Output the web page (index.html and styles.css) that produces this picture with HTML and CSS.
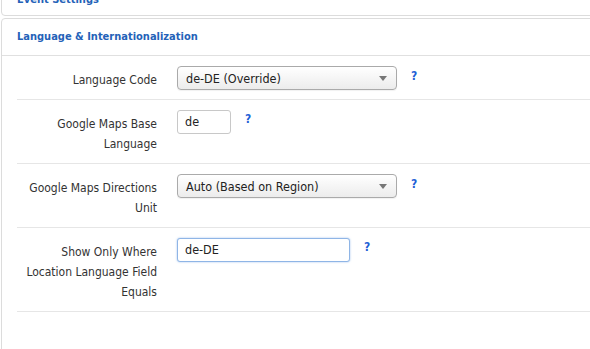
FILE: index.html
```html
<!DOCTYPE html>
<html>
<head>
<meta charset="utf-8">
<link rel="stylesheet" href="styles.css">
</head>
<body>
<div class="page">
  <div class="panel panel-collapsed">
    <div class="panel-head">Event Settings</div>
  </div>
  <div class="panel">
    <div class="panel-head">Language &amp; Internationalization</div>
    <div class="panel-body">
      <div class="row">
        <div class="label">Language Code</div>
        <div class="control">
          <div class="select"><span>de-DE (Override)</span><span class="caret"></span></div>
          <span class="help">?</span>
        </div>
      </div>
      <div class="row">
        <div class="label">Google Maps Base Language</div>
        <div class="control">
          <div class="input input-small">de</div>
          <span class="help">?</span>
        </div>
      </div>
      <div class="row">
        <div class="label">Google Maps Directions Unit</div>
        <div class="control">
          <div class="select"><span>Auto (Based on Region)</span><span class="caret"></span></div>
          <span class="help">?</span>
        </div>
      </div>
      <div class="row">
        <div class="label">Show Only Where Location Language Field Equals</div>
        <div class="control">
          <div class="input input-medium focus">de-DE</div>
          <span class="help">?</span>
        </div>
      </div>
    </div>
  </div>
</div>
</body>
</html>
```

FILE: styles.css
```css
html, body {
  margin: 0;
  padding: 0;
  background: #fff;
  overflow: hidden;
}
body {
  font-family: "DejaVu Sans Condensed", "DejaVu Sans", sans-serif;
  font-size: 12px;
  color: #333;
}
.page {
  width: 640px;
  padding-left: 1px;
}
.panel {
  border: 1px solid #dcdcdc;
  border-radius: 4px;
  background: #fff;
  margin-bottom: 2px;
  min-height: 400px;
}
.panel-collapsed {
  min-height: 0;
  margin-top: -22px;
}
.panel-head {
  height: 36px;
  line-height: 36px;
  padding-left: 15px;
  color: #2462b8;
  font-weight: bold;
  font-size: 11px;
}
.panel-collapsed .panel-head {
  line-height: 41px;
  overflow: hidden;
}
.panel-body {
  border-top: 1px solid #e0e0e0;
  padding-left: 15px;
}
.row {
  display: flex;
  gap: 20px;
  padding: 10px 0 9px;
  border-bottom: 1px solid #e6e6e6;
}
.label {
  width: 140px;
  text-align: right;
  line-height: 20px;
  padding-top: 4px;
}
.control {
  display: flex;
  align-items: flex-start;
  gap: 14px;
}
.select {
  box-sizing: border-box;
  width: 220px;
  height: 24px;
  border: 1px solid #aaa;
  border-radius: 4px;
  background: linear-gradient(#ffffff, #ececec);
  display: flex;
  align-items: center;
  justify-content: space-between;
  padding: 0 9px 0 8px;
  color: #222;
  font-size: 12.5px;
  box-shadow: 0 1px 1px rgba(0,0,0,0.06);
}
.caret {
  width: 0;
  height: 0;
  border-left: 4px solid transparent;
  border-right: 4px solid transparent;
  border-top: 5px solid #777;
}
.input {
  box-sizing: border-box;
  height: 24px;
  border: 1px solid #c8c8c8;
  border-radius: 3px;
  line-height: 22px;
  padding: 0 7px;
  color: #222;
  font-size: 12.5px;
  background: #fff;
}
.input-small { width: 54px; }
.input-medium { width: 173px; }
.focus {
  border-color: #8fb5e6;
  box-shadow: 0 0 2px rgba(82, 144, 222, 0.6);
}
.help {
  color: #1f5fd6;
  font-size: 12px;
  font-weight: bold;
  line-height: 18px;
  padding-top: 1px;
}
.row:nth-child(2) .help, .row:nth-child(4) .help { padding-top: 0; }
```
